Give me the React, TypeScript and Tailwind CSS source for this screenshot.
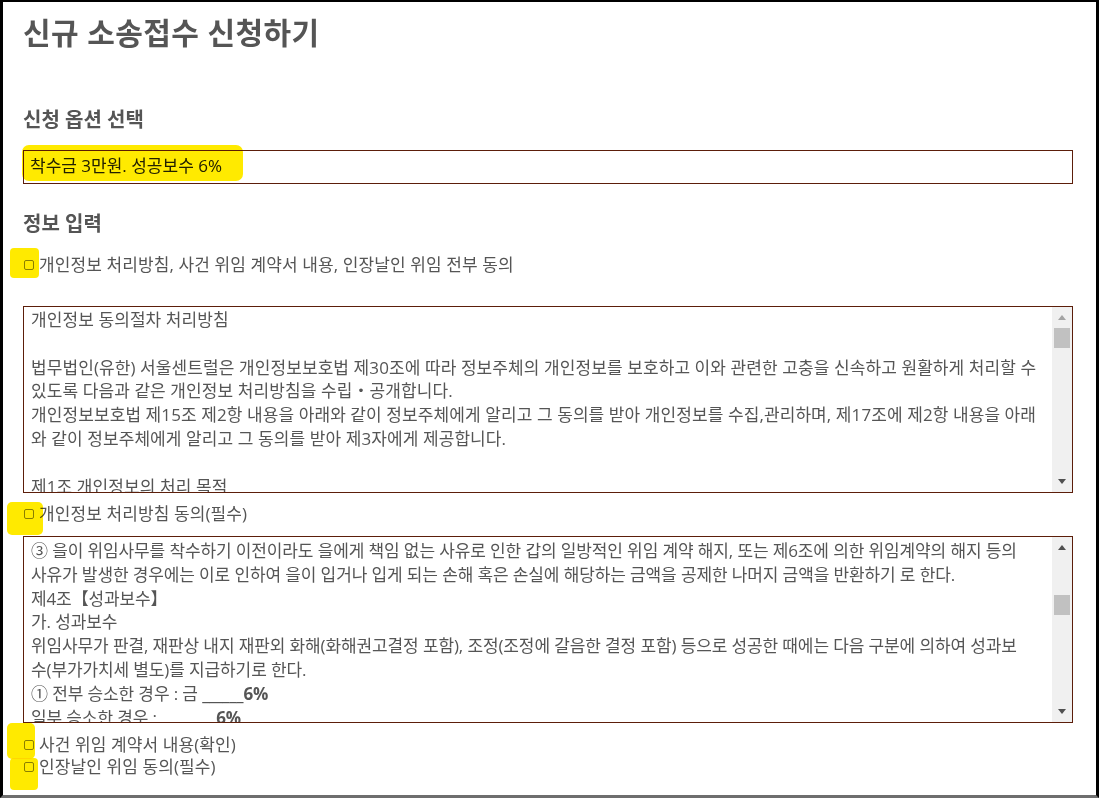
import React from 'react';

const privacyLines: string[] = [
  '개인정보 동의절차 처리방침',
  '',
  '법무법인(유한) 서울센트럴은 개인정보보호법 제30조에 따라 정보주체의 개인정보를 보호하고 이와 관련한 고충을 신속하고 원활하게 처리할 수',
  '있도록 다음과 같은 개인정보 처리방침을 수립・공개합니다.',
  '개인정보보호법 제15조 제2항 내용을 아래와 같이 정보주체에게 알리고 그 동의를 받아 개인정보를 수집,관리하며, 제17조에 제2항 내용을 아래',
  '와 같이 정보주체에게 알리고 그 동의를 받아 제3자에게 제공합니다.',
  '',
  '제1조 개인정보의 처리 목적',
];

const contractLines: React.ReactNode[] = [
  '③ 을이 위임사무를 착수하기 이전이라도 을에게 책임 없는 사유로 인한 갑의 일방적인 위임 계약 해지, 또는 제6조에 의한 위임계약의 해지 등의',
  '사유가 발생한 경우에는 이로 인하여 을이 입거나 입게 되는 손해 혹은 손실에 해당하는 금액을 공제한 나머지 금액을 반환하기 로 한다.',
  '제4조【성과보수】',
  '가. 성과보수',
  '위임사무가 판결, 재판상 내지 재판외 화해(화해권고결정 포함), 조정(조정에 갈음한 결정 포함) 등으로 성공한 때에는 다음 구분에 의하여 성과보',
  '수(부가가치세 별도)를 지급하기로 한다.',
  <>
    ① 전부 승소한 경우 : 금 <b>______6%</b>
  </>,
  <>
    일부 승소한 경우 : <b>________6%</b>
  </>,
];

function Checkbox() {
  return <span className="inline-block h-[10px] w-[10px] shrink-0 rounded-[2px] border border-[#8a8a8a] bg-white" />;
}

function CheckRow({ label, className }: { label: string; className: string }) {
  return (
    <div className={'flex h-[22px] items-center ' + className}>
      <span className="ml-[1px] flex">
        <Checkbox />
      </span>
      <span className="ml-[5px] whitespace-nowrap tracking-[0.1px]">{label}</span>
    </div>
  );
}

function Scrollbar({ thumbClass, upMuted }: { thumbClass: string; upMuted?: boolean }) {
  return (
    <div className="flex w-[20px] shrink-0 flex-col bg-[#f0f0f0]">
      <div className="flex h-[21px] items-center justify-center">
        <span
          className={
            'h-0 w-0 border-x-[4.5px] border-b-[5px] border-x-transparent ' +
            (upMuted ? 'border-b-[#a3a3a3]' : 'border-b-[#505050]')
          }
        />
      </div>
      <div className="flex-1">
        <div className={'mx-[2px] h-[20px] bg-[#c1c1c1] ' + thumbClass} />
      </div>
      <div className="flex h-[21px] items-center justify-center">
        <span className="h-0 w-0 border-x-[4.5px] border-t-[5px] border-x-transparent border-t-[#505050]" />
      </div>
    </div>
  );
}

function TextBox({ lines, className, padClass, thumbClass, upMuted }: {
  lines: React.ReactNode[];
  className: string;
  padClass: string;
  thumbClass: string;
  upMuted?: boolean;
}) {
  return (
    <div className={'flex h-[187px] border border-[#5c1e0a] ' + className}>
      <div className={'flex-1 overflow-hidden pl-[7px] leading-[23.8px] ' + padClass}>
        {lines.map((line, i) => (
          <div key={i} className="h-[23.8px] whitespace-nowrap">
            {line === '' ? '\u00a0' : line}
          </div>
        ))}
      </div>
      <Scrollbar thumbClass={thumbClass} upMuted={upMuted} />
    </div>
  );
}

export default function App() {
  return (
    <div className="relative h-[798px] w-[1099px] overflow-hidden border-t-2 border-r-[3px] border-b-[3px] border-l-[3px] border-t-black border-r-black border-b-[#6e6e6e] border-l-black bg-white pr-[23px] pl-[20px] font-['Open_Sans','Noto_Sans_CJK_KR',sans-serif] text-[17px] text-[#555]">
      {/* Title */}
      <h1 className="mt-[13px] h-[36px] text-[30px] leading-[36px] font-bold tracking-[0.4px] whitespace-nowrap">신규 소송접수 신청하기</h1>

      {/* Option */}
      <h2 className="mt-[57px] h-[24px] text-[20px] leading-[24px] font-bold">신청 옵션 선택</h2>
      <div className="mt-[18px] flex h-[34px] items-center border border-[#5c1e0a] pb-[2px] pl-[6px] text-[#222]">
        착수금 3만원. 성공보수 6%
      </div>

      {/* Info */}
      <h2 className="mt-[28px] h-[24px] text-[20px] leading-[24px] font-bold">정보 입력</h2>
      <CheckRow className="mt-[18px]" label="개인정보 처리방침, 사건 위임 계약서 내용, 인장날인 위임 전부 동의" />

      <TextBox className="mt-[30px]" padClass="pt-[1px] tracking-[0.09px]" lines={privacyLines} thumbClass="mt-0" upMuted />
      <CheckRow className="mt-[10px]" label="개인정보 처리방침 동의(필수)" />

      <TextBox className="mt-[11px]" padClass="pt-[2px] tracking-[-0.12px]" lines={contractLines} thumbClass="mt-[37px]" />
      <CheckRow className="mt-[11px]" label="사건 위임 계약서 내용(확인)" />
      <CheckRow className="" label="인장날인 위임 동의(필수)" />

      {/* marker highlights */}
      <span className="pointer-events-none absolute top-[143px] left-[19px] h-[36px] w-[221px] rounded-[7px] bg-[#ffea00] mix-blend-multiply" />
      <span className="pointer-events-none absolute top-[246px] left-[7px] h-[30px] w-[29px] rounded-[4px] bg-[#ffea00] mix-blend-multiply" />
      <span className="pointer-events-none absolute top-[500px] left-[4px] h-[33px] w-[36px] rounded-[5px] bg-[#ffea00] mix-blend-multiply" />
      <span className="pointer-events-none absolute top-[721px] left-[4px] h-[36px] w-[28px] rounded-[5px] bg-[#ffea00] mix-blend-multiply" />
      <span className="pointer-events-none absolute top-[756px] left-[7px] h-[32px] w-[28px] rounded-[4px] bg-[#ffea00] mix-blend-multiply" />
    </div>
  );
}
